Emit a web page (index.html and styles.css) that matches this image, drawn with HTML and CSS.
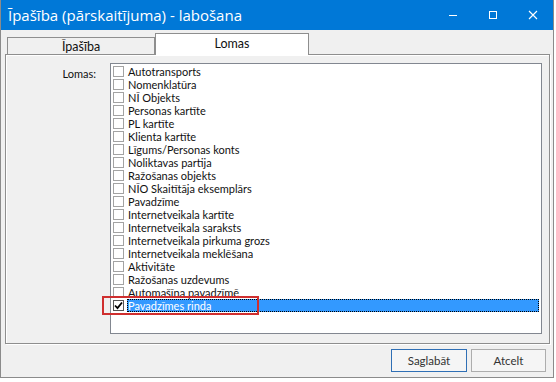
FILE: index.html
```html
<!DOCTYPE html>
<html lang="lv">
<head>
  <meta charset="UTF-8" />
  <title>Īpašība (pārskaitījuma) - labošana</title>
  <link rel="stylesheet" href="styles.css">
</head>
<body>

<div class="window">
  <header class="titlebar">
    <div class="title">Īpašība (pārskaitījuma) - labošana</div>
    <div class="controls">
      <span class="ctl"><svg width="10" height="10" viewBox="0 0 10 10"><path d="M1 5.5h8" stroke="#fff" stroke-width="1"/></svg></span>
      <span class="ctl"><svg width="10" height="10" viewBox="0 0 10 10"><rect x="1.5" y="1.5" width="7" height="7" fill="none" stroke="#fff" stroke-width="1"/></svg></span>
      <span class="ctl"><svg width="10" height="10" viewBox="0 0 10 10"><path d="M1 1l8 8M9 1l-8 8" stroke="#fff" stroke-width="1.1"/></svg></span>
    </div>
  </header>

  <div class="tabs">
    <div class="tab">Īpašība</div>
    <div class="tab active">Lomas</div>
  </div>

  <div class="page">
    <div class="label">Lomas:</div>
    <div class="listbox" id="list">
      <div class="mark"></div>
    </div>
  </div>

  <div class="buttons">
    <button class="btn default">Saglabāt</button>
    <button class="btn">Atcelt</button>
  </div>
</div>

<script>
  const roles = [
    "Autotransports", "Nomenklatūra", "NĪ Objekts", "Personas kartīte", "PL kartīte",
    "Klienta kartīte", "Līgums/Personas konts", "Noliktavas partija", "Ražošanas objekts",
    "NĪO Skaitītāja eksemplārs", "Pavadzīme", "Internetveikala kartīte", "Internetveikala saraksts",
    "Internetveikala pirkuma grozs", "Internetveikala meklēšana", "Aktivitāte",
    "Ražošanas uzdevums", "Automašīna pavadzīmē", "Pavadzīmes rinda"
  ];
  const list = document.getElementById('list');

  roles.forEach((name, i) => {
    const last = i === roles.length - 1;
    const row = document.createElement('div');
    row.className = 'row';
    row.innerHTML =
      `<span class="check${last ? ' checked' : ''}">` +
      (last ? '<svg width="9" height="9" viewBox="0 0 9 9"><path d="M1 4.5l2.5 2.6L8 1.5" fill="none" stroke="#000" stroke-width="1.8"/></svg>' : '') +
      `</span><span class="text${last ? ' selected' : ''}">${name}</span>`;
    list.appendChild(row);
  });
</script>

</body>
</html>
```
FILE: styles.css
```css
* { margin: 0; padding: 0; box-sizing: border-box; }
body {
  background: #fff;
  font-family: Lato, "Liberation Sans", sans-serif;
  font-size: 11px;
  color: #000;
}

.window {
  width: 554px;
  height: 378px;
  background: #f0f0f0;
  border: 1px solid #8b8b8b;
  border-top: none;
}

.titlebar {
  height: 30px;
  background: #0078d7;
  color: #fff;
  display: flex;
  align-items: center;
  justify-content: space-between;
}

.title {
  font-family: "Open Sans", sans-serif;
  font-size: 15px;
  padding-left: 7px;
  padding-bottom: 1px;
}

.controls { display: flex; }

.ctl {
  width: 40px;
  height: 30px;
  display: flex;
  align-items: center;
  justify-content: center;
}

.tabs {
  display: flex;
  align-items: flex-end;
  margin: 3px 0 0 6px;
  height: 21px;
  position: relative;
  z-index: 1;
}

.tab {
  width: 148px;
  height: 17px;
  border: 1px solid #8e8e8e;
  border-bottom: none;
  background: #f0f0f0;
  font-size: 12.5px;
  text-align: center;
  line-height: 18px;
  color: #111;
}

.tab.active {
  width: 154px;
  height: 22px;
  margin-bottom: -1px;
  background: #fff;
  line-height: 20px;
  padding-bottom: 3px;
}

.page {
  height: 290px;
  margin: 0 3px 0 4px;
  border: 1px solid #8e8e8e;
  box-shadow: 1px 1px 0 #fff, inset 1px 1px 0 #fff;
  display: flex;
  padding: 8px 7px 9px 0;
}

.label {
  width: 90px;
  text-align: right;
  padding-top: 4px;
  margin-right: 14px;
  color: #111;
}

.listbox {
  flex: 1;
  position: relative;
  background: #fff;
  border: 1px solid #828790;
  padding-top: 1px;
}

.row {
  height: 13px;
  display: flex;
  align-items: center;
  padding-left: 2px;
  line-height: 13px;
  white-space: nowrap;
  color: #111;
}

.check {
  width: 11px;
  height: 11px;
  border: 1px solid #a3a3a3;
  background: #fff;
  margin-right: 3px;
  flex: none;
  display: flex;
  align-items: center;
  justify-content: center;
}

.check.checked { border-color: #555; }

.text {
  flex: 1;
  height: 13px;
  padding-left: 1px;
  margin-right: 2px;
}

.text.selected {
  background: #3399ff;
  color: #fff;
  outline: 1px dotted #000;
  outline-offset: -1px;
}

.mark {
  position: absolute;
  left: -9px;
  top: 232px;
  width: 157px;
  height: 19px;
  border: 2px solid #cf2f2f;
  z-index: 2;
}

.buttons {
  display: flex;
  justify-content: flex-end;
  gap: 4px;
  margin: 5px 7px 0 0;
}

.btn {
  width: 75px;
  height: 23px;
  background: #f5f5f5;
  border: 1px solid #adadad;
  font-family: Lato, sans-serif;
  font-size: 11.5px;
  color: #333;
}

.btn.default {
  width: 76px;
  border-color: #2f6fb5;
}
```
